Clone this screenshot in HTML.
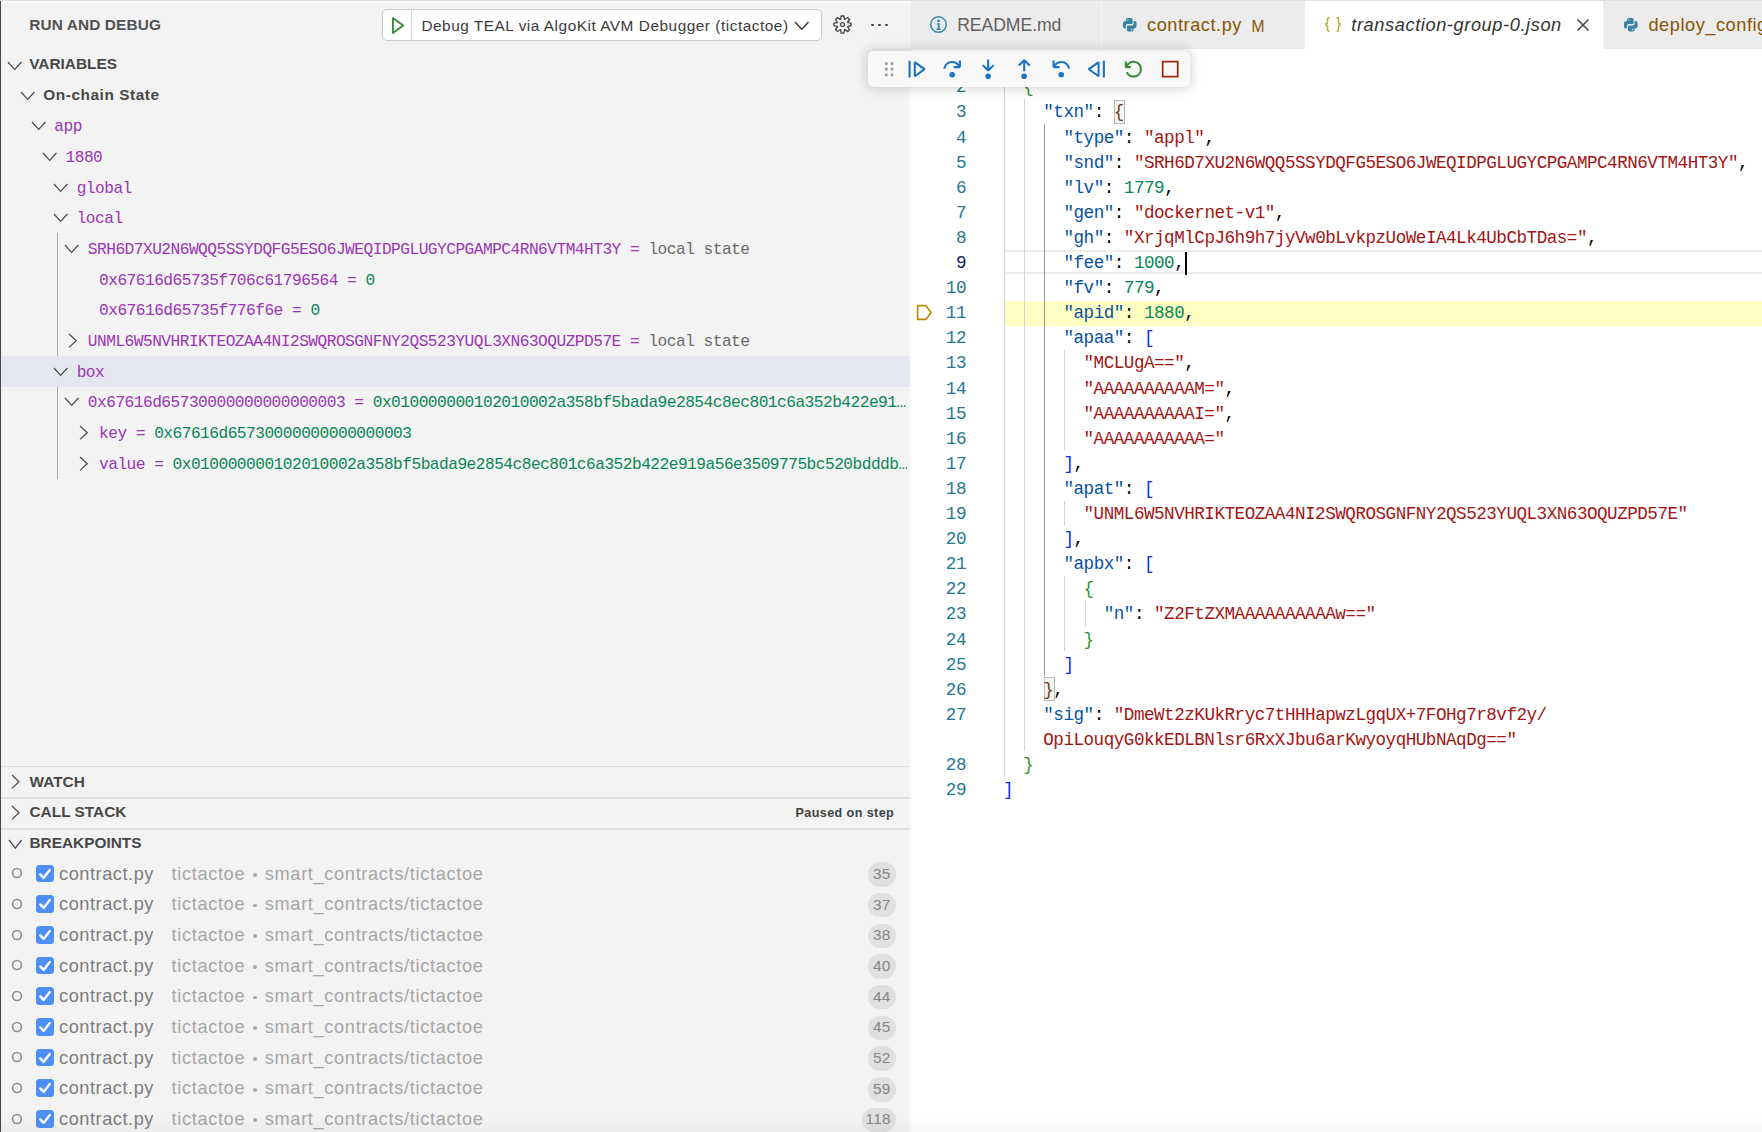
<!DOCTYPE html>
<html><head><meta charset="utf-8">
<style>
html,body{margin:0;padding:0;}
body{width:1762px;height:1132px;overflow:hidden;position:relative;background:#ffffff;font-family:"Liberation Sans", sans-serif;}
.a{position:absolute;white-space:pre;}
.sb{position:absolute;left:0;top:0;width:911px;height:1132px;background:#f3f3f3;overflow:hidden;}
.mono{font-family:"Liberation Mono", monospace;}
.tm{font-family:"Liberation Mono", monospace;font-size:16.2px;letter-spacing:-0.525px;}
.nm{color:#9a36b3;}
.num{color:#098658;}
.eqc{color:#9a36b3;}
.gr{color:#6a6a6a;}
.ed{font-family:"Liberation Mono", monospace;font-size:17.6px;letter-spacing:-0.490px;color:#000;}
.k{color:#0451a5;}
.s{color:#a31515;}
.n{color:#098658;}
.b1{color:#0431fa;}
.b2{color:#319331;}
.b3{color:#7b3814;}
</style></head><body>

<div class="sb">
<div class="a" style="left:0;top:0;width:911px;height:1px;background:#e0e0e0"></div>
<div class="a" style="left:1px;top:1px;width:910px;height:1.5px;background:#f9f9f9"></div>
<div class="a" style="left:0;top:1px;width:1.1px;height:1131px;background:#454545"></div>
<div class="a" style="left:29.20px;top:9.96px;line-height:30.80px;font-size:15.4px;font-weight:bold;color:#525252;letter-spacing:0.12px">RUN AND DEBUG</div>
<div class="a" style="left:382px;top:9.3px;width:437.6px;height:29.6px;border:1px solid #cbcbcb;border-radius:5px;background:#fff"></div>
<div class="a" style="left:411px;top:10.3px;width:1px;height:29.6px;background:#d4d4d4"></div>
<svg class="a" style="left:390px;top:15px" width="18" height="21"><polygon points="2.9,3.1 13.2,10.5 2.9,17.9" fill="none" stroke="#388a34" stroke-width="1.9" stroke-linejoin="round"/></svg>
<div class="a" style="left:421.40px;top:10.56px;line-height:30.80px;font-size:15.4px;color:#3b3b3b;letter-spacing:0.52px">Debug TEAL via AlgoKit AVM Debugger (tictactoe)</div>
<svg class="a" style="left:792.50px;top:19.80px" width="17.50" height="11.20"><polyline points="2,2 8.75,9.20 15.50,2" fill="none" stroke="#3b3b3b" stroke-width="1.5"/></svg>
<svg class="a" style="left:832.3px;top:14.3px" width="21" height="21" viewBox="0 0 16 16"><path fill="#424242" d="M9.1 4.4L8.6 2H7.4l-.5 2.4-.7.3-2-1.3-.9.8 1.3 2-.2.7-2.4.5v1.2l2.4.5.3.8-1.3 2 .8.8 2-1.3.8.3.4 2.3h1.2l.5-2.4.8-.3 2 1.3.8-.8-1.3-2 .3-.8 2.3-.4V7.4l-2.4-.5-.3-.8 1.3-2-.8-.8-2 1.3-.7-.2zM9.4 1l.5 2.4L12 2.1l2 2-1.4 2.1 2.4.4v2.8l-2.4.5L14 12l-2 2-2.1-1.4-.5 2.4H6.6l-.5-2.4L4 13.9l-2-2 1.4-2.1L1 9.4V6.6l2.4-.5L2.1 4l2-2 2.1 1.4.4-2.4h2.8zm.6 7c0 1.1-.9 2-2 2s-2-.9-2-2 .9-2 2-2 2 .9 2 2zM8 9c.6 0 1-.4 1-1s-.4-1-1-1-1 .4-1 1 .4 1 1 1z"/></svg>
<div class="a" style="left:870.95px;top:23.6px;width:2.7px;height:2.7px;border-radius:50%;background:#424242"></div>
<div class="a" style="left:877.95px;top:23.6px;width:2.7px;height:2.7px;border-radius:50%;background:#424242"></div>
<div class="a" style="left:884.95px;top:23.6px;width:2.7px;height:2.7px;border-radius:50%;background:#424242"></div>
<svg class="a" style="left:6.20px;top:59.50px" width="17.40" height="11.60"><polyline points="2,2 8.70,9.60 15.40,2" fill="none" stroke="#4b4b4b" stroke-width="1.25"/></svg>
<div class="a" style="left:29.20px;top:49.46px;line-height:30.80px;font-size:15.4px;font-weight:bold;color:#474747">VARIABLES</div>
<div class="a" style="left:1.1px;top:356.12px;width:910px;height:30.68px;background:#e4e6f1"></div>
<div class="a" style="left:57px;top:233.40px;width:1px;height:122.72px;background:#a9a9a9"></div>
<div class="a" style="left:57px;top:386.80px;width:1px;height:92.04px;background:#a9a9a9"></div>
<svg class="a" style="left:18.70px;top:89.64px" width="17.40" height="11.40"><polyline points="2,2 8.70,9.40 15.40,2" fill="none" stroke="#4b4b4b" stroke-width="1.25"/></svg>
<div class="a" style="left:43.30px;top:80.40px;line-height:30.80px;font-size:15.4px;font-weight:bold;color:#474747;letter-spacing:0.55px">On-chain State</div>
<svg class="a" style="left:29.86px;top:120.32px" width="17.40" height="11.40"><polyline points="2,2 8.70,9.40 15.40,2" fill="none" stroke="#4b4b4b" stroke-width="1.25"/></svg>
<div class="a" style="left:54.36px;top:110.68px;width:852.64px;height:30.68px;overflow:hidden">
<div class="a tm" style="left:0.00px;top:111.20px;line-height:32.40px;top:0.52px"><span class="nm">app</span></div>
</div>
<svg class="a" style="left:41.02px;top:151.00px" width="17.40" height="11.40"><polyline points="2,2 8.70,9.40 15.40,2" fill="none" stroke="#4b4b4b" stroke-width="1.25"/></svg>
<div class="a" style="left:65.52px;top:141.36px;width:841.48px;height:30.68px;overflow:hidden">
<div class="a tm" style="left:0.00px;top:141.88px;line-height:32.40px;top:0.52px"><span class="nm">1880</span></div>
</div>
<svg class="a" style="left:52.18px;top:181.68px" width="17.40" height="11.40"><polyline points="2,2 8.70,9.40 15.40,2" fill="none" stroke="#4b4b4b" stroke-width="1.25"/></svg>
<div class="a" style="left:76.68px;top:172.04px;width:830.32px;height:30.68px;overflow:hidden">
<div class="a tm" style="left:0.00px;top:172.56px;line-height:32.40px;top:0.52px"><span class="nm">global</span></div>
</div>
<svg class="a" style="left:52.18px;top:212.36px" width="17.40" height="11.40"><polyline points="2,2 8.70,9.40 15.40,2" fill="none" stroke="#4b4b4b" stroke-width="1.25"/></svg>
<div class="a" style="left:76.68px;top:202.72px;width:830.32px;height:30.68px;overflow:hidden">
<div class="a tm" style="left:0.00px;top:203.24px;line-height:32.40px;top:0.52px"><span class="nm">local</span></div>
</div>
<svg class="a" style="left:63.34px;top:243.04px" width="17.40" height="11.40"><polyline points="2,2 8.70,9.40 15.40,2" fill="none" stroke="#4b4b4b" stroke-width="1.25"/></svg>
<div class="a" style="left:87.84px;top:233.40px;width:819.16px;height:30.68px;overflow:hidden">
<div class="a tm" style="left:0.00px;top:233.92px;line-height:32.40px;top:0.52px"><span class="nm">SRH6D7XU2N6WQQ5SSYDQFG5ESO6JWEQIDPGLUGYCPGAMPC4RN6VTM4HT3Y</span><span class="eqc"> = </span><span class="gr">local state</span></div>
</div>
<div class="a" style="left:99.00px;top:264.08px;width:808.00px;height:30.68px;overflow:hidden">
<div class="a tm" style="left:0.00px;top:264.60px;line-height:32.40px;top:0.52px"><span class="nm">0x67616d65735f706c61796564</span><span class="eqc"> = </span><span class="num">0</span></div>
</div>
<div class="a" style="left:99.00px;top:294.76px;width:808.00px;height:30.68px;overflow:hidden">
<div class="a tm" style="left:0.00px;top:295.28px;line-height:32.40px;top:0.52px"><span class="nm">0x67616d65735f776f6e</span><span class="eqc"> = </span><span class="num">0</span></div>
</div>
<svg class="a" style="left:66.94px;top:332.08px" width="11.30" height="17.40"><polyline points="2,2 9.30,8.70 2,15.40" fill="none" stroke="#4b4b4b" stroke-width="1.25"/></svg>
<div class="a" style="left:87.84px;top:325.44px;width:819.16px;height:30.68px;overflow:hidden">
<div class="a tm" style="left:0.00px;top:325.96px;line-height:32.40px;top:0.52px"><span class="nm">UNML6W5NVHRIKTEOZAA4NI2SWQROSGNFNY2QS523YUQL3XN63OQUZPD57E</span><span class="eqc"> = </span><span class="gr">local state</span></div>
</div>
<svg class="a" style="left:52.18px;top:365.76px" width="17.40" height="11.40"><polyline points="2,2 8.70,9.40 15.40,2" fill="none" stroke="#4b4b4b" stroke-width="1.25"/></svg>
<div class="a" style="left:76.68px;top:356.12px;width:830.32px;height:30.68px;overflow:hidden">
<div class="a tm" style="left:0.00px;top:356.64px;line-height:32.40px;top:0.52px"><span class="nm">box</span></div>
</div>
<svg class="a" style="left:63.34px;top:396.44px" width="17.40" height="11.40"><polyline points="2,2 8.70,9.40 15.40,2" fill="none" stroke="#4b4b4b" stroke-width="1.25"/></svg>
<div class="a" style="left:87.84px;top:386.80px;width:819.16px;height:30.68px;overflow:hidden">
<div class="a tm" style="left:0.00px;top:387.32px;line-height:32.40px;top:0.52px"><span class="nm">0x67616d65730000000000000003</span><span class="eqc"> = </span><span class="num">0x010000000102010002a358bf5bada9e2854c8ec801c6a352b422e91…</span></div>
</div>
<svg class="a" style="left:78.10px;top:424.12px" width="11.30" height="17.40"><polyline points="2,2 9.30,8.70 2,15.40" fill="none" stroke="#4b4b4b" stroke-width="1.25"/></svg>
<div class="a" style="left:99.00px;top:417.48px;width:808.00px;height:30.68px;overflow:hidden">
<div class="a tm" style="left:0.00px;top:418.00px;line-height:32.40px;top:0.52px"><span class="nm">key</span><span class="eqc"> = </span><span class="num">0x67616d65730000000000000003</span></div>
</div>
<svg class="a" style="left:78.10px;top:454.80px" width="11.30" height="17.40"><polyline points="2,2 9.30,8.70 2,15.40" fill="none" stroke="#4b4b4b" stroke-width="1.25"/></svg>
<div class="a" style="left:99.00px;top:448.16px;width:808.00px;height:30.68px;overflow:hidden">
<div class="a tm" style="left:0.00px;top:448.68px;line-height:32.40px;top:0.52px"><span class="nm">value</span><span class="eqc"> = </span><span class="num">0x010000000102010002a358bf5bada9e2854c8ec801c6a352b422e919a56e3509775bc520bdddb…</span></div>
</div>
<div class="a" style="left:1.1px;top:766.10px;width:910px;height:1.4px;background:#e0e0e0"></div>
<svg class="a" style="left:10.00px;top:773.34px" width="11.00" height="17.40"><polyline points="2,2 9.00,8.70 2,15.40" fill="none" stroke="#4b4b4b" stroke-width="1.25"/></svg>
<div class="a" style="left:29.50px;top:766.66px;line-height:30.80px;font-size:15.4px;font-weight:bold;color:#474747">WATCH</div>
<div class="a" style="left:1.1px;top:797.20px;width:910px;height:1.4px;background:#e0e0e0"></div>
<svg class="a" style="left:10.00px;top:804.44px" width="11.00" height="17.40"><polyline points="2,2 9.00,8.70 2,15.40" fill="none" stroke="#4b4b4b" stroke-width="1.25"/></svg>
<div class="a" style="left:29.50px;top:797.46px;line-height:30.80px;font-size:15.4px;font-weight:bold;color:#474747">CALL STACK</div>
<div class="a" style="left:795.50px;top:800.53px;line-height:25.20px;font-size:12.6px;font-weight:bold;color:#424242;letter-spacing:0.4px">Paused on step</div>
<div class="a" style="left:1.1px;top:828.30px;width:910px;height:1.4px;background:#e0e0e0"></div>
<svg class="a" style="left:6.50px;top:838.14px" width="16.70" height="12.20"><polyline points="2,2 8.35,10.20 14.70,2" fill="none" stroke="#4b4b4b" stroke-width="1.25"/></svg>
<div class="a" style="left:29.50px;top:828.06px;line-height:30.80px;font-size:15.4px;font-weight:bold;color:#474747">BREAKPOINTS</div>
<svg class="a" style="left:9.9px;top:866.40px" width="14" height="14"><circle cx="7" cy="7" r="4.45" fill="none" stroke="#8c8c8c" stroke-width="1.6"/></svg>
<div class="a" style="left:36.1px;top:864.60px;width:17.8px;height:17.6px;border-radius:3.5px;background:#4e8ef7"></div>
<svg class="a" style="left:36.1px;top:864.60px" width="18" height="18"><polyline points="4.3,9.4 7.6,12.9 13.8,5.1" fill="none" stroke="#fff" stroke-width="2.4" stroke-linecap="round" stroke-linejoin="round"/></svg>
<div class="a" style="left:59.00px;top:855.59px;line-height:36.40px;font-size:18.2px;color:#7d7d7d;letter-spacing:0.55px">contract.py</div>
<div class="a" style="left:171.50px;top:855.59px;line-height:36.40px;font-size:18.2px;color:#a6a6a6;letter-spacing:0.66px">tictactoe</div>
<div class="a" style="left:253.3px;top:872.85px;width:3.9px;height:3.9px;border-radius:50%;background:#a6a6a6"></div>
<div class="a" style="left:264.80px;top:855.59px;line-height:36.40px;font-size:18.2px;color:#a6a6a6;letter-spacing:0.66px">smart_contracts/tictactoe</div>
<div class="a" style="left:867.70px;top:862.25px;width:28px;height:24.5px;border-radius:12.2px;background:#e0e0e0"></div>
<div class="a" style="left:872.90px;top:859.01px;line-height:30.80px;font-size:15.4px;color:#858585;letter-spacing:0.3px">35</div>
<svg class="a" style="left:9.9px;top:897.08px" width="14" height="14"><circle cx="7" cy="7" r="4.45" fill="none" stroke="#8c8c8c" stroke-width="1.6"/></svg>
<div class="a" style="left:36.1px;top:895.28px;width:17.8px;height:17.6px;border-radius:3.5px;background:#4e8ef7"></div>
<svg class="a" style="left:36.1px;top:895.28px" width="18" height="18"><polyline points="4.3,9.4 7.6,12.9 13.8,5.1" fill="none" stroke="#fff" stroke-width="2.4" stroke-linecap="round" stroke-linejoin="round"/></svg>
<div class="a" style="left:59.00px;top:886.27px;line-height:36.40px;font-size:18.2px;color:#7d7d7d;letter-spacing:0.55px">contract.py</div>
<div class="a" style="left:171.50px;top:886.27px;line-height:36.40px;font-size:18.2px;color:#a6a6a6;letter-spacing:0.66px">tictactoe</div>
<div class="a" style="left:253.3px;top:903.53px;width:3.9px;height:3.9px;border-radius:50%;background:#a6a6a6"></div>
<div class="a" style="left:264.80px;top:886.27px;line-height:36.40px;font-size:18.2px;color:#a6a6a6;letter-spacing:0.66px">smart_contracts/tictactoe</div>
<div class="a" style="left:867.70px;top:892.93px;width:28px;height:24.5px;border-radius:12.2px;background:#e0e0e0"></div>
<div class="a" style="left:872.90px;top:889.69px;line-height:30.80px;font-size:15.4px;color:#858585;letter-spacing:0.3px">37</div>
<svg class="a" style="left:9.9px;top:927.76px" width="14" height="14"><circle cx="7" cy="7" r="4.45" fill="none" stroke="#8c8c8c" stroke-width="1.6"/></svg>
<div class="a" style="left:36.1px;top:925.96px;width:17.8px;height:17.6px;border-radius:3.5px;background:#4e8ef7"></div>
<svg class="a" style="left:36.1px;top:925.96px" width="18" height="18"><polyline points="4.3,9.4 7.6,12.9 13.8,5.1" fill="none" stroke="#fff" stroke-width="2.4" stroke-linecap="round" stroke-linejoin="round"/></svg>
<div class="a" style="left:59.00px;top:916.95px;line-height:36.40px;font-size:18.2px;color:#7d7d7d;letter-spacing:0.55px">contract.py</div>
<div class="a" style="left:171.50px;top:916.95px;line-height:36.40px;font-size:18.2px;color:#a6a6a6;letter-spacing:0.66px">tictactoe</div>
<div class="a" style="left:253.3px;top:934.21px;width:3.9px;height:3.9px;border-radius:50%;background:#a6a6a6"></div>
<div class="a" style="left:264.80px;top:916.95px;line-height:36.40px;font-size:18.2px;color:#a6a6a6;letter-spacing:0.66px">smart_contracts/tictactoe</div>
<div class="a" style="left:867.70px;top:923.61px;width:28px;height:24.5px;border-radius:12.2px;background:#e0e0e0"></div>
<div class="a" style="left:872.90px;top:920.37px;line-height:30.80px;font-size:15.4px;color:#858585;letter-spacing:0.3px">38</div>
<svg class="a" style="left:9.9px;top:958.44px" width="14" height="14"><circle cx="7" cy="7" r="4.45" fill="none" stroke="#8c8c8c" stroke-width="1.6"/></svg>
<div class="a" style="left:36.1px;top:956.64px;width:17.8px;height:17.6px;border-radius:3.5px;background:#4e8ef7"></div>
<svg class="a" style="left:36.1px;top:956.64px" width="18" height="18"><polyline points="4.3,9.4 7.6,12.9 13.8,5.1" fill="none" stroke="#fff" stroke-width="2.4" stroke-linecap="round" stroke-linejoin="round"/></svg>
<div class="a" style="left:59.00px;top:947.63px;line-height:36.40px;font-size:18.2px;color:#7d7d7d;letter-spacing:0.55px">contract.py</div>
<div class="a" style="left:171.50px;top:947.63px;line-height:36.40px;font-size:18.2px;color:#a6a6a6;letter-spacing:0.66px">tictactoe</div>
<div class="a" style="left:253.3px;top:964.89px;width:3.9px;height:3.9px;border-radius:50%;background:#a6a6a6"></div>
<div class="a" style="left:264.80px;top:947.63px;line-height:36.40px;font-size:18.2px;color:#a6a6a6;letter-spacing:0.66px">smart_contracts/tictactoe</div>
<div class="a" style="left:867.70px;top:954.29px;width:28px;height:24.5px;border-radius:12.2px;background:#e0e0e0"></div>
<div class="a" style="left:872.90px;top:951.05px;line-height:30.80px;font-size:15.4px;color:#858585;letter-spacing:0.3px">40</div>
<svg class="a" style="left:9.9px;top:989.12px" width="14" height="14"><circle cx="7" cy="7" r="4.45" fill="none" stroke="#8c8c8c" stroke-width="1.6"/></svg>
<div class="a" style="left:36.1px;top:987.32px;width:17.8px;height:17.6px;border-radius:3.5px;background:#4e8ef7"></div>
<svg class="a" style="left:36.1px;top:987.32px" width="18" height="18"><polyline points="4.3,9.4 7.6,12.9 13.8,5.1" fill="none" stroke="#fff" stroke-width="2.4" stroke-linecap="round" stroke-linejoin="round"/></svg>
<div class="a" style="left:59.00px;top:978.31px;line-height:36.40px;font-size:18.2px;color:#7d7d7d;letter-spacing:0.55px">contract.py</div>
<div class="a" style="left:171.50px;top:978.31px;line-height:36.40px;font-size:18.2px;color:#a6a6a6;letter-spacing:0.66px">tictactoe</div>
<div class="a" style="left:253.3px;top:995.57px;width:3.9px;height:3.9px;border-radius:50%;background:#a6a6a6"></div>
<div class="a" style="left:264.80px;top:978.31px;line-height:36.40px;font-size:18.2px;color:#a6a6a6;letter-spacing:0.66px">smart_contracts/tictactoe</div>
<div class="a" style="left:867.70px;top:984.97px;width:28px;height:24.5px;border-radius:12.2px;background:#e0e0e0"></div>
<div class="a" style="left:872.90px;top:981.73px;line-height:30.80px;font-size:15.4px;color:#858585;letter-spacing:0.3px">44</div>
<svg class="a" style="left:9.9px;top:1019.80px" width="14" height="14"><circle cx="7" cy="7" r="4.45" fill="none" stroke="#8c8c8c" stroke-width="1.6"/></svg>
<div class="a" style="left:36.1px;top:1018.00px;width:17.8px;height:17.6px;border-radius:3.5px;background:#4e8ef7"></div>
<svg class="a" style="left:36.1px;top:1018.00px" width="18" height="18"><polyline points="4.3,9.4 7.6,12.9 13.8,5.1" fill="none" stroke="#fff" stroke-width="2.4" stroke-linecap="round" stroke-linejoin="round"/></svg>
<div class="a" style="left:59.00px;top:1008.99px;line-height:36.40px;font-size:18.2px;color:#7d7d7d;letter-spacing:0.55px">contract.py</div>
<div class="a" style="left:171.50px;top:1008.99px;line-height:36.40px;font-size:18.2px;color:#a6a6a6;letter-spacing:0.66px">tictactoe</div>
<div class="a" style="left:253.3px;top:1026.25px;width:3.9px;height:3.9px;border-radius:50%;background:#a6a6a6"></div>
<div class="a" style="left:264.80px;top:1008.99px;line-height:36.40px;font-size:18.2px;color:#a6a6a6;letter-spacing:0.66px">smart_contracts/tictactoe</div>
<div class="a" style="left:867.70px;top:1015.65px;width:28px;height:24.5px;border-radius:12.2px;background:#e0e0e0"></div>
<div class="a" style="left:872.90px;top:1012.41px;line-height:30.80px;font-size:15.4px;color:#858585;letter-spacing:0.3px">45</div>
<svg class="a" style="left:9.9px;top:1050.48px" width="14" height="14"><circle cx="7" cy="7" r="4.45" fill="none" stroke="#8c8c8c" stroke-width="1.6"/></svg>
<div class="a" style="left:36.1px;top:1048.68px;width:17.8px;height:17.6px;border-radius:3.5px;background:#4e8ef7"></div>
<svg class="a" style="left:36.1px;top:1048.68px" width="18" height="18"><polyline points="4.3,9.4 7.6,12.9 13.8,5.1" fill="none" stroke="#fff" stroke-width="2.4" stroke-linecap="round" stroke-linejoin="round"/></svg>
<div class="a" style="left:59.00px;top:1039.67px;line-height:36.40px;font-size:18.2px;color:#7d7d7d;letter-spacing:0.55px">contract.py</div>
<div class="a" style="left:171.50px;top:1039.67px;line-height:36.40px;font-size:18.2px;color:#a6a6a6;letter-spacing:0.66px">tictactoe</div>
<div class="a" style="left:253.3px;top:1056.93px;width:3.9px;height:3.9px;border-radius:50%;background:#a6a6a6"></div>
<div class="a" style="left:264.80px;top:1039.67px;line-height:36.40px;font-size:18.2px;color:#a6a6a6;letter-spacing:0.66px">smart_contracts/tictactoe</div>
<div class="a" style="left:867.70px;top:1046.33px;width:28px;height:24.5px;border-radius:12.2px;background:#e0e0e0"></div>
<div class="a" style="left:872.90px;top:1043.09px;line-height:30.80px;font-size:15.4px;color:#858585;letter-spacing:0.3px">52</div>
<svg class="a" style="left:9.9px;top:1081.16px" width="14" height="14"><circle cx="7" cy="7" r="4.45" fill="none" stroke="#8c8c8c" stroke-width="1.6"/></svg>
<div class="a" style="left:36.1px;top:1079.36px;width:17.8px;height:17.6px;border-radius:3.5px;background:#4e8ef7"></div>
<svg class="a" style="left:36.1px;top:1079.36px" width="18" height="18"><polyline points="4.3,9.4 7.6,12.9 13.8,5.1" fill="none" stroke="#fff" stroke-width="2.4" stroke-linecap="round" stroke-linejoin="round"/></svg>
<div class="a" style="left:59.00px;top:1070.35px;line-height:36.40px;font-size:18.2px;color:#7d7d7d;letter-spacing:0.55px">contract.py</div>
<div class="a" style="left:171.50px;top:1070.35px;line-height:36.40px;font-size:18.2px;color:#a6a6a6;letter-spacing:0.66px">tictactoe</div>
<div class="a" style="left:253.3px;top:1087.61px;width:3.9px;height:3.9px;border-radius:50%;background:#a6a6a6"></div>
<div class="a" style="left:264.80px;top:1070.35px;line-height:36.40px;font-size:18.2px;color:#a6a6a6;letter-spacing:0.66px">smart_contracts/tictactoe</div>
<div class="a" style="left:867.70px;top:1077.01px;width:28px;height:24.5px;border-radius:12.2px;background:#e0e0e0"></div>
<div class="a" style="left:872.90px;top:1073.77px;line-height:30.80px;font-size:15.4px;color:#858585;letter-spacing:0.3px">59</div>
<svg class="a" style="left:9.9px;top:1111.84px" width="14" height="14"><circle cx="7" cy="7" r="4.45" fill="none" stroke="#8c8c8c" stroke-width="1.6"/></svg>
<div class="a" style="left:36.1px;top:1110.04px;width:17.8px;height:17.6px;border-radius:3.5px;background:#4e8ef7"></div>
<svg class="a" style="left:36.1px;top:1110.04px" width="18" height="18"><polyline points="4.3,9.4 7.6,12.9 13.8,5.1" fill="none" stroke="#fff" stroke-width="2.4" stroke-linecap="round" stroke-linejoin="round"/></svg>
<div class="a" style="left:59.00px;top:1101.03px;line-height:36.40px;font-size:18.2px;color:#7d7d7d;letter-spacing:0.55px">contract.py</div>
<div class="a" style="left:171.50px;top:1101.03px;line-height:36.40px;font-size:18.2px;color:#a6a6a6;letter-spacing:0.66px">tictactoe</div>
<div class="a" style="left:253.3px;top:1118.29px;width:3.9px;height:3.9px;border-radius:50%;background:#a6a6a6"></div>
<div class="a" style="left:264.80px;top:1101.03px;line-height:36.40px;font-size:18.2px;color:#a6a6a6;letter-spacing:0.66px">smart_contracts/tictactoe</div>
<div class="a" style="left:861.70px;top:1107.69px;width:34px;height:24.5px;border-radius:12.2px;background:#e0e0e0"></div>
<div class="a" style="left:865.50px;top:1104.45px;line-height:30.80px;font-size:15.4px;color:#858585;letter-spacing:0.3px">118</div>
<div class="a" style="left:907.5px;top:49px;width:3.5px;height:1083px;background:linear-gradient(to right, rgba(255,255,255,0.15), rgba(255,255,255,0.55))"></div>
</div>
<div class="a" style="left:911px;top:0;width:851px;height:1132px;background:#fff;overflow:hidden">
<div class="a" style="left:0;top:0;width:851px;height:48.7px;background:#f3f3f3"></div>
<div class="a" style="left:0;top:0;width:851px;height:1px;background:#e0e0e0"></div>
<div class="a" style="left:0.00px;top:1px;width:190.40px;height:47.7px;background:#ececec"></div>
<div class="a" style="left:190.40px;top:1px;width:1px;height:47.7px;background:#f3f3f3"></div>
<div class="a" style="left:191.40px;top:1px;width:202.60px;height:47.7px;background:#ececec"></div>
<div class="a" style="left:394.00px;top:1px;width:1px;height:47.7px;background:#f3f3f3"></div>
<div class="a" style="left:394.00px;top:1px;width:298.00px;height:47.7px;background:#ffffff"></div>
<div class="a" style="left:692.00px;top:1px;width:197.00px;height:47.7px;background:#ececec"></div>
<div class="a" style="left:889.00px;top:1px;width:1px;height:47.7px;background:#f3f3f3"></div>
<svg class="a" style="left:18.20px;top:15.3px" width="19" height="19" viewBox="0 0 19 19"><circle cx="9.5" cy="9.5" r="7.8" fill="none" stroke="#3a89ad" stroke-width="1.5"/><circle cx="9.6" cy="5.9" r="1.4" fill="#3a89ad"/><path d="M7.8 8.2h2.9v5.4h1.1v1.3H7.5v-1.3h1.2v-4.1h-.9z" fill="#3a89ad"/></svg>
<div class="a" style="left:46.20px;top:8.30px;line-height:35.20px;font-size:17.6px;color:#616161;letter-spacing:-0.05px">README.md</div>
<svg class="a" style="left:211.20px;top:16.80px" width="15.5" height="15.5" viewBox="0 0 16 16"><path fill="#3a84a3" fill-rule="evenodd" d="M5.7 1.1h3.5a1.8 1.8 0 0 1 1.8 1.8v3.1a1.3 1.3 0 0 1-1.3 1.3H5.9a1.9 1.9 0 0 0-1.9 1.9v2.6H2.9A1.9 1.9 0 0 1 1 9.9V6.4a1.9 1.9 0 0 1 1.9-1.9H4V2.8a1.7 1.7 0 0 1 1.7-1.7zM6.1 2.2a.7.7 0 1 0 0 1.4.7.7 0 0 0 0-1.4z"/><path fill="#3a84a3" fill-rule="evenodd" transform="rotate(180 8 8)" d="M5.7 1.1h3.5a1.8 1.8 0 0 1 1.8 1.8v3.1a1.3 1.3 0 0 1-1.3 1.3H5.9a1.9 1.9 0 0 0-1.9 1.9v2.6H2.9A1.9 1.9 0 0 1 1 9.9V6.4a1.9 1.9 0 0 1 1.9-1.9H4V2.8a1.7 1.7 0 0 1 1.7-1.7zM6.1 2.2a.7.7 0 1 0 0 1.4.7.7 0 0 0 0-1.4z"/></svg>
<div class="a" style="left:236.00px;top:7.49px;line-height:36.40px;font-size:18.2px;color:#895503;letter-spacing:0.55px">contract.py</div>
<div class="a" style="left:340.60px;top:10.69px;line-height:31.20px;font-size:15.6px;color:#895503">M</div>
<svg class="a" style="left:413px;top:16px" width="18" height="18" viewBox="0 0 18 18"><path d="M5.5 1.6c-1.6 0-2 .8-2 2v2.6c0 1-.5 1.6-1.6 1.7v1c1.1.1 1.6.7 1.6 1.7v2.6c0 1.2.4 2 2 2M12.5 1.6c1.6 0 2 .8 2 2v2.6c0 1 .5 1.6 1.6 1.7v1c-1.1.1-1.6.7-1.6 1.7v2.6c0 1.2-.4 2-2 2" fill="none" stroke="#b3b33a" stroke-width="1.6"/></svg>
<div class="a" style="left:440.30px;top:7.49px;line-height:36.40px;font-size:18.2px;color:#333333;font-style:italic;letter-spacing:0.6px">transaction-group-0.json</div>
<svg class="a" style="left:664.5px;top:18px" width="14" height="14"><path d="M1.5 1.5L12.5 12.5M12.5 1.5L1.5 12.5" stroke="#424242" stroke-width="1.45"/></svg>
<svg class="a" style="left:712.20px;top:16.80px" width="15.5" height="15.5" viewBox="0 0 16 16"><path fill="#3a84a3" fill-rule="evenodd" d="M5.7 1.1h3.5a1.8 1.8 0 0 1 1.8 1.8v3.1a1.3 1.3 0 0 1-1.3 1.3H5.9a1.9 1.9 0 0 0-1.9 1.9v2.6H2.9A1.9 1.9 0 0 1 1 9.9V6.4a1.9 1.9 0 0 1 1.9-1.9H4V2.8a1.7 1.7 0 0 1 1.7-1.7zM6.1 2.2a.7.7 0 1 0 0 1.4.7.7 0 0 0 0-1.4z"/><path fill="#3a84a3" fill-rule="evenodd" transform="rotate(180 8 8)" d="M5.7 1.1h3.5a1.8 1.8 0 0 1 1.8 1.8v3.1a1.3 1.3 0 0 1-1.3 1.3H5.9a1.9 1.9 0 0 0-1.9 1.9v2.6H2.9A1.9 1.9 0 0 1 1 9.9V6.4a1.9 1.9 0 0 1 1.9-1.9H4V2.8a1.7 1.7 0 0 1 1.7-1.7zM6.1 2.2a.7.7 0 1 0 0 1.4.7.7 0 0 0 0-1.4z"/></svg>
<div class="a" style="left:737.40px;top:7.49px;line-height:36.40px;font-size:18.2px;color:#895503;letter-spacing:0.55px">deploy_config.py</div>
<div class="a" style="left:93px;top:250.30px;width:758px;height:24px;border-top:2px solid #ececec;border-bottom:2px solid #ececec;box-sizing:border-box"></div>
<div class="a" style="left:93px;top:300.50px;width:758px;height:25px;background:#ffffc4"></div>
<div class="a" style="left:93.00px;top:73.80px;width:1px;height:702.80px;background:#d3d3d3"></div>
<div class="a" style="left:113.14px;top:98.90px;width:1px;height:652.60px;background:#d3d3d3"></div>
<div class="a" style="left:133.28px;top:124.00px;width:1px;height:552.20px;background:#939393"></div>
<div class="a" style="left:153.42px;top:349.90px;width:1px;height:100.40px;background:#d3d3d3"></div>
<div class="a" style="left:153.42px;top:500.50px;width:1px;height:25.10px;background:#d3d3d3"></div>
<div class="a" style="left:153.42px;top:575.80px;width:1px;height:75.30px;background:#d3d3d3"></div>
<div class="a" style="left:173.56px;top:600.90px;width:1px;height:25.10px;background:#d3d3d3"></div>
<div class="a" style="left:203.27px;top:99.90px;width:11.07px;height:24.10px;box-sizing:border-box;border:1px solid #b9b9b9;background:rgba(0,100,0,0.06)"></div>
<div class="a" style="left:132.78px;top:677.20px;width:11.07px;height:24.10px;box-sizing:border-box;border:1px solid #b9b9b9;background:rgba(0,100,0,0.06)"></div>
<div class="a ed" style="left:92.00px;top:45.21px;line-height:35.20px"><span class="b1">[</span></div>
<div class="a ed" style="left:44.93px;top:45.21px;line-height:35.20px;color:#237893">1</div>
<div class="a ed" style="left:92.00px;top:70.31px;line-height:35.20px">  <span class="b2">{</span></div>
<div class="a ed" style="left:44.93px;top:70.31px;line-height:35.20px;color:#237893">2</div>
<div class="a ed" style="left:92.00px;top:95.41px;line-height:35.20px">    <span class="k">"txn"</span>: <span class="b3">{</span></div>
<div class="a ed" style="left:44.93px;top:95.41px;line-height:35.20px;color:#237893">3</div>
<div class="a ed" style="left:92.00px;top:120.51px;line-height:35.20px">      <span class="k">"type"</span>: <span class="s">"appl"</span>,</div>
<div class="a ed" style="left:44.93px;top:120.51px;line-height:35.20px;color:#237893">4</div>
<div class="a ed" style="left:92.00px;top:145.61px;line-height:35.20px">      <span class="k">"snd"</span>: <span class="s">"SRH6D7XU2N6WQQ5SSYDQFG5ESO6JWEQIDPGLUGYCPGAMPC4RN6VTM4HT3Y"</span>,</div>
<div class="a ed" style="left:44.93px;top:145.61px;line-height:35.20px;color:#237893">5</div>
<div class="a ed" style="left:92.00px;top:170.71px;line-height:35.20px">      <span class="k">"lv"</span>: <span class="n">1779</span>,</div>
<div class="a ed" style="left:44.93px;top:170.71px;line-height:35.20px;color:#237893">6</div>
<div class="a ed" style="left:92.00px;top:195.81px;line-height:35.20px">      <span class="k">"gen"</span>: <span class="s">"dockernet-v1"</span>,</div>
<div class="a ed" style="left:44.93px;top:195.81px;line-height:35.20px;color:#237893">7</div>
<div class="a ed" style="left:92.00px;top:220.91px;line-height:35.20px">      <span class="k">"gh"</span>: <span class="s">"XrjqMlCpJ6h9h7jyVw0bLvkpzUoWeIA4Lk4UbCbTDas="</span>,</div>
<div class="a ed" style="left:44.93px;top:220.91px;line-height:35.20px;color:#237893">8</div>
<div class="a ed" style="left:92.00px;top:246.01px;line-height:35.20px">      <span class="k">"fee"</span>: <span class="n">1000</span>,</div>
<div class="a ed" style="left:44.93px;top:246.01px;line-height:35.20px;color:#0b216f">9</div>
<div class="a ed" style="left:92.00px;top:271.11px;line-height:35.20px">      <span class="k">"fv"</span>: <span class="n">779</span>,</div>
<div class="a ed" style="left:34.86px;top:271.11px;line-height:35.20px;color:#237893">10</div>
<div class="a ed" style="left:92.00px;top:296.21px;line-height:35.20px">      <span class="k">"apid"</span>: <span class="n">1880</span>,</div>
<div class="a ed" style="left:34.86px;top:296.21px;line-height:35.20px;color:#237893">11</div>
<div class="a ed" style="left:92.00px;top:321.31px;line-height:35.20px">      <span class="k">"apaa"</span>: <span class="b1">[</span></div>
<div class="a ed" style="left:34.86px;top:321.31px;line-height:35.20px;color:#237893">12</div>
<div class="a ed" style="left:92.00px;top:346.41px;line-height:35.20px">        <span class="s">"MCLUgA=="</span>,</div>
<div class="a ed" style="left:34.86px;top:346.41px;line-height:35.20px;color:#237893">13</div>
<div class="a ed" style="left:92.00px;top:371.51px;line-height:35.20px">        <span class="s">"AAAAAAAAAAM="</span>,</div>
<div class="a ed" style="left:34.86px;top:371.51px;line-height:35.20px;color:#237893">14</div>
<div class="a ed" style="left:92.00px;top:396.61px;line-height:35.20px">        <span class="s">"AAAAAAAAAAI="</span>,</div>
<div class="a ed" style="left:34.86px;top:396.61px;line-height:35.20px;color:#237893">15</div>
<div class="a ed" style="left:92.00px;top:421.71px;line-height:35.20px">        <span class="s">"AAAAAAAAAAA="</span></div>
<div class="a ed" style="left:34.86px;top:421.71px;line-height:35.20px;color:#237893">16</div>
<div class="a ed" style="left:92.00px;top:446.81px;line-height:35.20px">      <span class="b1">]</span>,</div>
<div class="a ed" style="left:34.86px;top:446.81px;line-height:35.20px;color:#237893">17</div>
<div class="a ed" style="left:92.00px;top:471.91px;line-height:35.20px">      <span class="k">"apat"</span>: <span class="b1">[</span></div>
<div class="a ed" style="left:34.86px;top:471.91px;line-height:35.20px;color:#237893">18</div>
<div class="a ed" style="left:92.00px;top:497.01px;line-height:35.20px">        <span class="s">"UNML6W5NVHRIKTEOZAA4NI2SWQROSGNFNY2QS523YUQL3XN63OQUZPD57E"</span></div>
<div class="a ed" style="left:34.86px;top:497.01px;line-height:35.20px;color:#237893">19</div>
<div class="a ed" style="left:92.00px;top:522.11px;line-height:35.20px">      <span class="b1">]</span>,</div>
<div class="a ed" style="left:34.86px;top:522.11px;line-height:35.20px;color:#237893">20</div>
<div class="a ed" style="left:92.00px;top:547.21px;line-height:35.20px">      <span class="k">"apbx"</span>: <span class="b1">[</span></div>
<div class="a ed" style="left:34.86px;top:547.21px;line-height:35.20px;color:#237893">21</div>
<div class="a ed" style="left:92.00px;top:572.31px;line-height:35.20px">        <span class="b2">{</span></div>
<div class="a ed" style="left:34.86px;top:572.31px;line-height:35.20px;color:#237893">22</div>
<div class="a ed" style="left:92.00px;top:597.41px;line-height:35.20px">          <span class="k">"n"</span>: <span class="s">"Z2FtZXMAAAAAAAAAAw=="</span></div>
<div class="a ed" style="left:34.86px;top:597.41px;line-height:35.20px;color:#237893">23</div>
<div class="a ed" style="left:92.00px;top:622.51px;line-height:35.20px">        <span class="b2">}</span></div>
<div class="a ed" style="left:34.86px;top:622.51px;line-height:35.20px;color:#237893">24</div>
<div class="a ed" style="left:92.00px;top:647.61px;line-height:35.20px">      <span class="b1">]</span></div>
<div class="a ed" style="left:34.86px;top:647.61px;line-height:35.20px;color:#237893">25</div>
<div class="a ed" style="left:92.00px;top:672.71px;line-height:35.20px">    <span class="b3">}</span>,</div>
<div class="a ed" style="left:34.86px;top:672.71px;line-height:35.20px;color:#237893">26</div>
<div class="a ed" style="left:92.00px;top:697.81px;line-height:35.20px">    <span class="k">"sig"</span>: <span class="s">"DmeWt2zKUkRryc7tHHHapwzLgqUX+7FOHg7r8vf2y/</span></div>
<div class="a ed" style="left:34.86px;top:697.81px;line-height:35.20px;color:#237893">27</div>
<div class="a ed" style="left:92.00px;top:748.01px;line-height:35.20px">  <span class="b2">}</span></div>
<div class="a ed" style="left:34.86px;top:748.01px;line-height:35.20px;color:#237893">28</div>
<div class="a ed" style="left:92.00px;top:773.11px;line-height:35.20px"><span class="b1">]</span></div>
<div class="a ed" style="left:34.86px;top:773.11px;line-height:35.20px;color:#237893">29</div>
<div class="a ed" style="left:92.00px;top:722.91px;line-height:35.20px">    <span class="s">OpiLouqyG0kkEDLBNlsr6RxXJbu6arKwyoyqHUbNAqDg=="</span></div>
<div class="a" style="left:274.26px;top:252.00px;width:2px;height:22.60px;background:#000"></div>
<svg class="a" style="left:4px;top:303.20px" width="20" height="19"><path d="M2.6 2.6h8.2l5.3 6.9-5.3 6.9H2.6z" fill="none" stroke="#be8700" stroke-width="1.6" stroke-linejoin="round"/></svg>
</div>
<div class="a" style="left:868px;top:50.7px;width:322px;height:36.1px;background:#f8f8f8;border-radius:5.5px;box-shadow:0 0 11px 2px rgba(0,0,0,0.16)"></div>
<svg class="a" style="left:878.00px;top:57.80px" width="22.4" height="22.4" viewBox="0 0 16 16"><path fill-rule="evenodd" clip-rule="evenodd" fill="#9e9e9e" d="M5 3h2v2H5zm0 4h2v2H5zm0 4h2v2H5zm4-8h2v2H9zm0 4h2v2H9zm0 4h2v2H9z"/></svg>
<svg class="a" style="left:904.50px;top:57.60px" width="22.4" height="22.4" viewBox="0 0 16 16"><path fill-rule="evenodd" clip-rule="evenodd" fill="#1b73c5" d="M2.5 2H4v12H2.5V2zm4.936.39L6.25 3v10l1.186.61 7-5V7.39l-7-5zM12.71 8l-4.96 3.543V4.457L12.71 8z"/></svg>
<svg class="a" style="left:940.80px;top:57.60px" width="22.4" height="22.4" viewBox="0 0 16 16"><path fill-rule="evenodd" clip-rule="evenodd" fill="#1b73c5" d="M14.25 5.75v-4h-1.5v2.542c-1.145-1.359-2.911-2.209-4.84-2.209-3.177 0-5.92 2.307-6.16 5.398l-.02.269h1.501l.022-.226c.212-2.195 2.202-3.94 4.656-3.94 1.736 0 3.244.875 4.05 2.166h-2.83v1.5h4.163l.962-.975V5.75h-.004zM8 14a2 2 0 1 0 0-4 2 2 0 0 0 0 4z"/></svg>
<svg class="a" style="left:977.10px;top:57.60px" width="22.4" height="22.4" viewBox="0 0 16 16"><path fill-rule="evenodd" clip-rule="evenodd" fill="#1b73c5" d="M8 9.532h.542l3.905-3.905-1.061-1.06-2.637 2.61V1H7.251v6.177l-2.637-2.61-1.061 1.06 3.905 3.905H8zm1.956 3.481a2 2 0 1 1-4 0 2 2 0 0 1 4 0z"/></svg>
<svg class="a" style="left:1013.40px;top:57.60px" width="22.4" height="22.4" viewBox="0 0 16 16"><path fill-rule="evenodd" clip-rule="evenodd" fill="#1b73c5" d="M8 1h-.542L3.553 4.905l1.061 1.06 2.637-2.61v6.177h1.498V3.355l2.637 2.61 1.061-1.06L8.542 1H8zm1.956 12.013a2 2 0 1 1-4 0 2 2 0 0 1 4 0z"/></svg>
<svg class="a" style="left:1049.70px;top:57.60px" width="22.4" height="22.4" viewBox="0 0 16 16"><path fill-rule="evenodd" clip-rule="evenodd" fill="#1b73c5" d="M1.75 5.75v-4h1.5v2.542c1.145-1.359 2.911-2.209 4.84-2.209 3.177 0 5.92 2.307 6.16 5.398l.02.269h-1.501l-.022-.226c-.212-2.195-2.202-3.940-4.656-3.940-1.736 0-3.244.875-4.050 2.166h2.830v1.5H2.707l-.962-.975V5.75h.005zM8 14a2 2 0 1 1 0-4 2 2 0 0 1 0 4z"/></svg>
<svg class="a" style="left:1086.00px;top:57.60px" width="22.4" height="22.4" viewBox="0 0 16 16"><path fill-rule="evenodd" clip-rule="evenodd" fill="#1b73c5" d="M13.5 2H12v12h1.5V2zm-4.936.39L9.75 3v10l-1.186.61-7-5V7.39l7-5zM3.29 8l4.960 3.543V4.457L3.29 8z"/></svg>
<svg class="a" style="left:1122.30px;top:57.60px" width="22.4" height="22.4" viewBox="0 0 16 16"><path fill-rule="evenodd" clip-rule="evenodd" fill="#388a34" d="M12.75 8a4.5 4.5 0 0 1-8.61 1.834l-1.391.565A6.001 6.001 0 0 0 14.25 8 6 6 0 0 0 3.5 4.334V2.5H2v4l.75.75h3.5v-1.5H4.352A4.5 4.5 0 0 1 12.75 8z"/></svg>
<svg class="a" style="left:1158.60px;top:57.60px" width="22.4" height="22.4" viewBox="0 0 16 16"><path fill-rule="evenodd" clip-rule="evenodd" fill="#a1260d" d="M2 2v12h12V2H2zm10.75 10.75h-9.5v-9.5h9.5v9.5z"/></svg>
<div class="a" style="left:0;top:1116px;width:1762px;height:16px;background:linear-gradient(to bottom, rgba(0,0,0,0), rgba(0,0,0,0.03))"></div>
</body></html>
